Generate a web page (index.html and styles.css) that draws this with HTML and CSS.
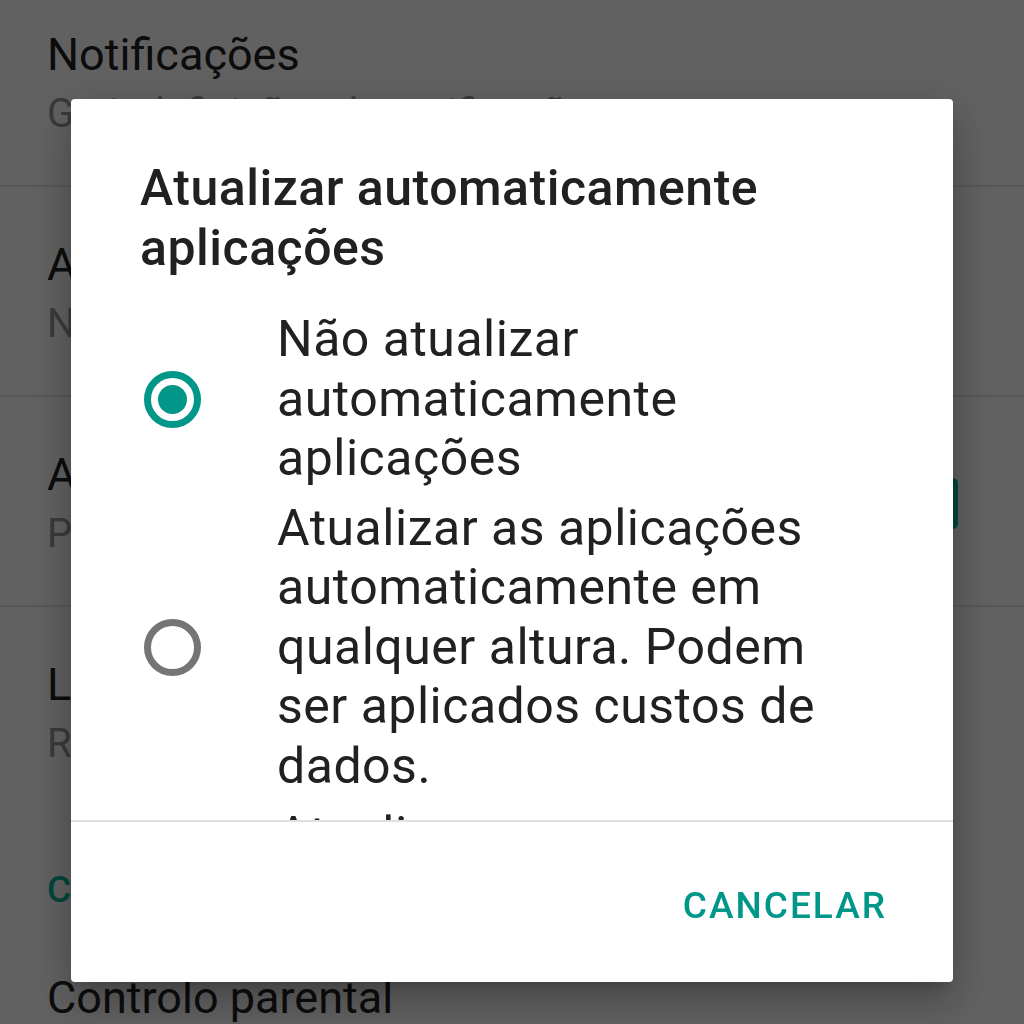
FILE: index.html
```html
<!DOCTYPE html>
<html lang="pt">
<head>
    <meta charset="UTF-8">
    <meta name="viewport" content="width=device-width, initial-scale=1.0">
    <title>Definições</title>
    <link rel="stylesheet" href="styles.css">
</head>
<body>
    <div class="settings">
        <div class="pref first">
            <div class="pref-text">
                <div class="pref-title">Notificações</div>
                <div class="pref-sub">Gerir definições de notificações</div>
            </div>
        </div>
        <div class="pref">
            <div class="pref-text">
                <div class="pref-title">Atualizar automaticamente aplicações</div>
                <div class="pref-sub">Não atualizar automaticamente aplicações</div>
            </div>
        </div>
        <div class="pref">
            <div class="pref-text">
                <div class="pref-title">Adicionar ícone ao ecrã principal</div>
                <div class="pref-sub">Para novas aplicações</div>
            </div>
            <span class="checkbox"></span>
        </div>
        <div class="pref last">
            <div class="pref-text">
                <div class="pref-title">Limpar histórico de pesquisa local</div>
                <div class="pref-sub">Remover todas as pesquisas que efetuou</div>
            </div>
        </div>
        <div class="category">Controlos do utilizador</div>
        <div class="pref after-category">
            <div class="pref-text">
                <div class="pref-title">Controlo parental</div>
            </div>
        </div>
    </div>

    <div class="scrim">
        <div class="dialog">
            <h2 class="dialog-title">Atualizar automaticamente aplicações</h2>
            <div class="choices">
                <div class="choice">
                    <span class="radio checked"></span>
                    <span class="choice-label">Não atualizar automaticamente aplicações</span>
                </div>
                <div class="choice">
                    <span class="radio"></span>
                    <span class="choice-label">Atualizar as aplicações automaticamente em qualquer altura. Podem ser aplicados custos de dados.</span>
                </div>
                <div class="choice">
                    <span class="radio"></span>
                    <span class="choice-label">Atualizar apenas com o Wi-Fi.</span>
                </div>
            </div>
            <div class="dialog-actions">
                <span class="btn-text">Cancelar</span>
            </div>
        </div>
    </div>
</body>
</html>
```

FILE: styles.css
```css
body {
    margin: 0;
    font-family: Roboto, "Noto Sans", sans-serif;
    background-color: #fff;
    color: #212121;
    height: 1024px;
    overflow: hidden;
}
.settings {
    height: 1024px;
    overflow: hidden;
}
.pref {
    display: flex;
    align-items: center;
    padding: 50px 66px 45px 47px;
    border-bottom: 2px solid #e5e5e5;
}
.pref.first {
    padding-top: 27px;
}
.pref.last {
    border-bottom: none;
}
.pref.after-category {
    padding-top: 58px;
    border-bottom: none;
}
.pref-text {
    flex: 1;
    min-width: 0;
}
.pref-title {
    font-size: 45px;
    line-height: 56px;
    white-space: nowrap;
}
.pref-sub {
    margin-top: 5px;
    font-size: 40px;
    line-height: 52px;
    color: #999;
    white-space: nowrap;
}
.checkbox {
    width: 51px;
    height: 51px;
    border-radius: 5px;
    background-color: #00b89a;
    flex-shrink: 0;
}
.category {
    margin-top: 53px;
    padding-left: 47px;
    font-size: 37px;
    line-height: 44px;
    font-weight: 500;
    color: #00b89a;
}
.scrim {
    position: fixed;
    top: 0;
    left: 0;
    right: 0;
    bottom: 0;
    background-color: rgba(0, 0, 0, 0.62);
    padding: 99px 71px;
}
.dialog {
    width: 882px;
    background-color: #fff;
    border-radius: 4px;
    overflow: hidden;
    box-shadow: 0 24px 38px 3px rgba(0, 0, 0, 0.14),
                0 9px 46px 8px rgba(0, 0, 0, 0.12),
                0 11px 15px -7px rgba(0, 0, 0, 0.2);
}
.dialog-title {
    margin: 0;
    padding: 59px 69px 0;
    font-size: 50px;
    line-height: 60px;
    font-weight: 500;
    letter-spacing: 0.5px;
    color: #212121;
}
.choices {
    height: 542px;
    box-sizing: border-box;
    padding-top: 27px;
    overflow: hidden;
}
.choice {
    display: flex;
    align-items: center;
    padding: 5px 80px 5px 73px;
}
.choice-label {
    flex: 1;
    margin-left: 76px;
    font-size: 50px;
    line-height: 59.5px;
    letter-spacing: 0.5px;
    color: #212121;
}
.radio {
    width: 57px;
    height: 57px;
    box-sizing: border-box;
    border: 7px solid #757575;
    border-radius: 50%;
    flex-shrink: 0;
    display: flex;
    align-items: center;
    justify-content: center;
}
.radio.checked {
    border-color: #009688;
}
.radio.checked::after {
    content: "";
    width: 29px;
    height: 29px;
    border-radius: 50%;
    background-color: #009688;
}
.dialog-actions {
    height: 162px;
    box-sizing: border-box;
    border-top: 2px solid #e0e0e0;
    display: flex;
    justify-content: flex-end;
    align-items: center;
    padding: 6px 66px 0 0;
}
.btn-text {
    font-size: 37px;
    font-weight: 500;
    letter-spacing: 2px;
    text-transform: uppercase;
    color: #009688;
}
```
